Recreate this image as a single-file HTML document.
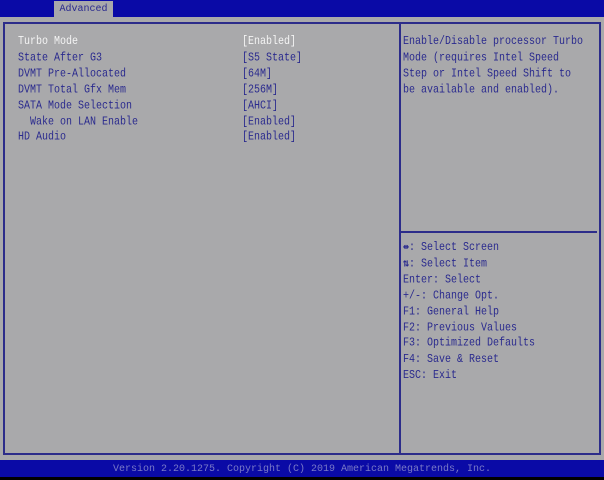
<html><head><style>
body{margin:0;width:604px;height:480px;background:#a9a9ab;position:relative;overflow:hidden;font-family:"Liberation Mono",monospace;font-size:10px;color:#2a2a8e}
div{position:absolute;white-space:pre}
.t{line-height:13.91px;transform:scaleY(1.15);transform-origin:0 0}
</style></head><body>
<div style="left:0;top:0;width:604px;height:17px;background:#0a0aa6"></div>
<div style="left:54px;top:1px;width:59px;height:16px;background:#a9a9ab;color:#2a2a8e;text-align:center;line-height:17px">Advanced</div>
<div style="left:3px;top:22px;width:594px;height:429px;border:2px solid #2c2c8a"></div>
<div style="left:399px;top:22px;width:2px;height:431px;background:#2c2c8a"></div>
<div style="left:401px;top:231px;width:196px;height:2px;background:#2c2c8a"></div>
<div class="t" style="left:18px;top:35px"><span style="color:#f4f4f4">Turbo Mode</span>
State After G3
DVMT Pre-Allocated
DVMT Total Gfx Mem
SATA Mode Selection
  Wake on LAN Enable
HD Audio</div>
<div class="t" style="left:242px;top:35px"><span style="color:#f4f4f4">[Enabled]</span>
[S5 State]
[64M]
[256M]
[AHCI]
[Enabled]
[Enabled]</div>
<div class="t" style="left:403px;top:35px">Enable/Disable processor Turbo
Mode (requires Intel Speed
Step or Intel Speed Shift to
be available and enabled).</div>
<div class="t" style="left:403px;top:241px"><b>⇹</b>: Select Screen
<b>⇅</b>: Select Item
Enter: Select
+/-: Change Opt.
F1: General Help
F2: Previous Values
F3: Optimized Defaults
F4: Save &amp; Reset
ESC: Exit</div>
<div style="left:0;top:460px;width:604px;height:17px;background:#0a0aa6;color:#7a7ac8;text-align:center;line-height:19px">Version 2.20.1275. Copyright (C) 2019 American Megatrends, Inc.</div>
<div style="left:0;top:477px;width:604px;height:3px;background:#000"></div>
</body></html>
